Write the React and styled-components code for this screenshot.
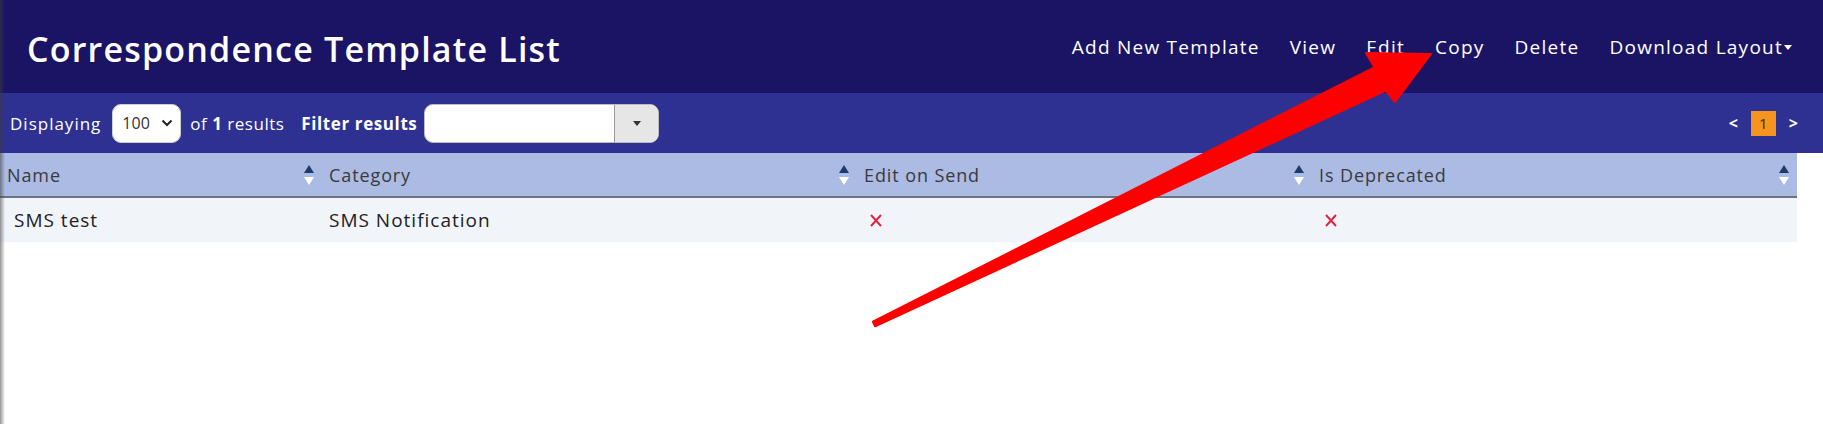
import React from 'react';
import styled, { createGlobalStyle } from 'styled-components';

const GlobalStyle = createGlobalStyle`
  html, body {
    margin: 0;
    padding: 0;
    background: #ffffff;
    font-family: "Open Sans", "Liberation Sans", sans-serif;
  }
`;

const Page = styled.div`
  position: relative;
  width: 1823px;
  height: 424px;
  overflow: hidden;
  background: #ffffff;

  &::before {
    content: '';
    position: absolute;
    left: 0;
    top: 0;
    bottom: 0;
    width: 5px;
    background: linear-gradient(to right, rgba(60, 60, 60, 0.55), rgba(60, 60, 60, 0));
    z-index: 5;
  }
`;

const Header = styled.header`
  height: 93px;
  background: #1b1464;
  display: flex;
  align-items: center;
  justify-content: space-between;
  padding: 0 31px 0 27px;
  box-sizing: border-box;
`;

const Title = styled.h1`
  margin: 0;
  color: #ffffff;
  font-size: 34px;
  font-weight: 600;
  letter-spacing: 1.2px;
  padding-top: 5px;
`;

const Nav = styled.nav`
  display: flex;
  align-items: center;
  gap: 30px;
  padding-top: 1px;
`;

const NavLink = styled.a`
  color: #ffffff;
  font-size: 19px;
  text-decoration: none;
  letter-spacing: 1.25px;
  display: flex;
  align-items: center;
  gap: 1px;
  cursor: pointer;
`;

const Caret = styled.span`
  width: 0;
  height: 0;
  border-left: 4px solid transparent;
  border-right: 4px solid transparent;
  border-top: 5px solid ${(p) => p.color || '#ffffff'};
  display: inline-block;
`;

const Toolbar = styled.div`
  height: 60px;
  background: #2e3192;
  display: flex;
  align-items: center;
  justify-content: space-between;
  padding: 0 25px 0 10px;
  box-sizing: border-box;
`;

const ToolGroup = styled.div`
  display: flex;
  align-items: center;
  gap: 9px;
`;

const Label = styled.span`
  color: #ffffff;
  font-size: 17px;
  font-weight: ${(p) => (p.bold ? 700 : 400)};
  letter-spacing: ${(p) => p.ls ?? 1}px;
  white-space: nowrap;
  margin-left: ${(p) => p.ml || 0}px;

  b {
    font-weight: 700;
  }
`;

const PageSelect = styled.div`
  width: 69px;
  height: 39px;
  box-sizing: border-box;
  margin-left: 2px;
  background: #ffffff;
  border: 1px solid #cfcfcf;
  border-radius: 9px;
  display: flex;
  align-items: center;
  justify-content: space-between;
  padding: 0 7px 0 9px;
  color: #333;
  font-size: 16px;
`;

const FilterBox = styled.div`
  width: 235px;
  height: 39px;
  box-sizing: border-box;
  margin-left: -2px;
  background: #ffffff;
  border: 1px solid #bdbdbd;
  border-radius: 9px;
  display: flex;
  overflow: hidden;
`;

const FilterInput = styled.div`
  flex: 1;
`;

const FilterButton = styled.div`
  width: 43px;
  background: #e6e6e6;
  border-left: 1px solid #9a9a9a;
  display: flex;
  align-items: center;
  justify-content: center;
`;

const Pager = styled.div`
  display: flex;
  align-items: center;
  gap: 13px;
  color: #ffffff;
  font-size: 16px;
  font-weight: 700;
`;

const PageNum = styled.span`
  width: 25px;
  height: 25px;
  background: #f7941d;
  color: #3a2a10;
  font-size: 15px;
  font-weight: 400;
  display: flex;
  align-items: center;
  justify-content: center;
`;

const Table = styled.div`
  width: 1797px;
  display: grid;
  grid-template-columns: 322px 535px 455px 485px;
`;

const HeadCell = styled.div`
  height: 45px;
  box-sizing: border-box;
  background: #abbbe3;
  border-bottom: 2px solid #6f7285;
  display: flex;
  align-items: center;
  justify-content: space-between;
  padding: 1px 8px 0 7px;
  color: #3a3a3a;
  font-size: 18px;
  letter-spacing: 0.9px;
`;

const BodyCell = styled.div`
  height: 44px;
  background: #f1f4f8;
  display: flex;
  align-items: center;
  padding-left: ${(p) => p.pl || 7}px;
  color: #222;
  font-size: 19px;
  letter-spacing: 1px;
`;

const Overlay = styled.svg`
  position: absolute;
  left: 0;
  top: 0;
  pointer-events: none;
  z-index: 10;
`;

const SortIcon = () => (
  <svg width="10" height="20" viewBox="0 0 10 20">
    <polygon points="0,8 5,0 10,8" fill="#1d3b6e" />
    <polygon points="0,12 10,12 5,20" fill="#ffffff" />
  </svg>
);

const Cross = () => (
  <svg width="12" height="13" viewBox="0 0 12 13">
    <path d="M1 1 L11 12 M11 1 L1 12" stroke="#e3203f" strokeWidth="1.9" fill="none" />
  </svg>
);

const Chevron = () => (
  <svg width="12" height="8" viewBox="0 0 12 8">
    <path d="M1.5 1.5 L6 6 L10.5 1.5" stroke="#222" strokeWidth="2" fill="none" />
  </svg>
);

const columns = ['Name', 'Category', 'Edit on Send', 'Is Deprecated'];
const links = ['Add New Template', 'View', 'Edit', 'Copy', 'Delete'];

export default function App() {
  return (
    <>
      <GlobalStyle />
      <Page>
        <Header>
          <Title>Correspondence Template List</Title>
          <Nav>
            {links.map((l) => (
              <NavLink key={l}>{l}</NavLink>
            ))}
            <NavLink>
              Download Layout
              <Caret />
            </NavLink>
          </Nav>
        </Header>
        <Toolbar>
          <ToolGroup>
            <Label>Displaying</Label>
            <PageSelect>
              100 <Chevron />
            </PageSelect>
            <Label ls={0.5}>
              of <b>1</b> results
            </Label>
            <Label bold ls={0.6} ml={8}>Filter results</Label>
            <FilterBox>
              <FilterInput />
              <FilterButton>
                <Caret color="#333" />
              </FilterButton>
            </FilterBox>
          </ToolGroup>
          <Pager>
            <span>&lt;</span>
            <PageNum>1</PageNum>
            <span>&gt;</span>
          </Pager>
        </Toolbar>
        <Table>
          {columns.map((c) => (
            <HeadCell key={c}>
              {c}
              <SortIcon />
            </HeadCell>
          ))}
          <BodyCell pl={14}>SMS test</BodyCell>
          <BodyCell>SMS Notification</BodyCell>
          <BodyCell pl={13}>
            <Cross />
          </BodyCell>
          <BodyCell pl={13}>
            <Cross />
          </BodyCell>
        </Table>
        <Overlay width="1823" height="424" viewBox="0 0 1823 424">
          <polygon
            points="872.9,321.75 1374.3,67.3 1366,53 1431,54 1395,102 1385.7,90.7 875.1,326.25"
            fill="#ff0000"
            stroke="#ff0000"
            strokeWidth="2"
            strokeLinejoin="round"
          />
        </Overlay>
      </Page>
    </>
  );
}
